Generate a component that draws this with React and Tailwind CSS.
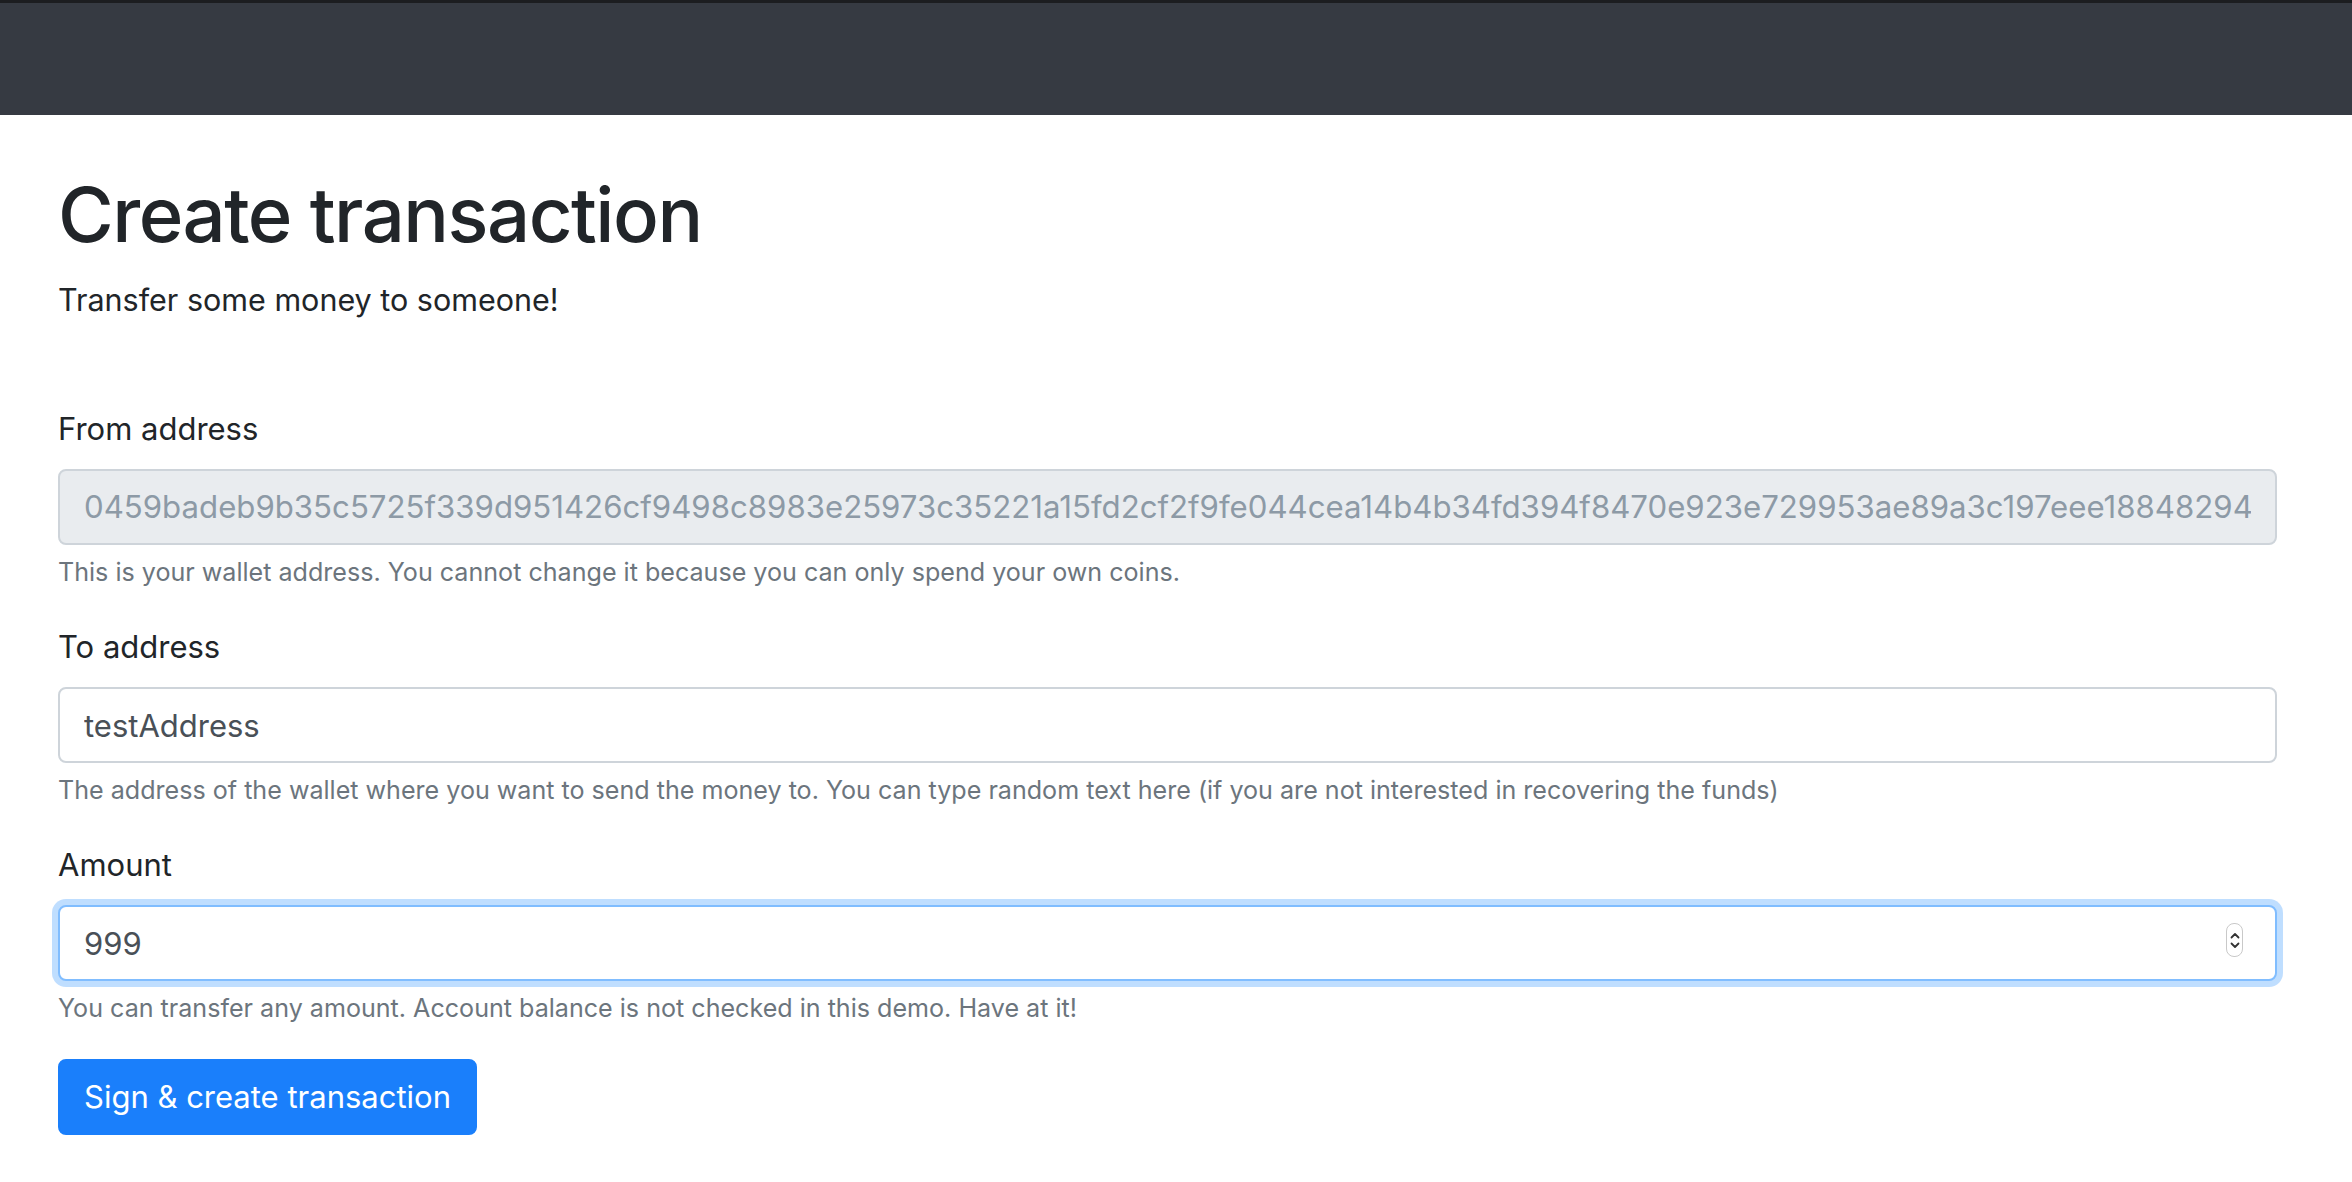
import React from 'react'

const FROM_ADDRESS =
  '0459badeb9b35c5725f339d951426cf9498c8983e25973c35221a15fd2cf2f9fe044cea14b4b34fd394f8470e923e729953ae89a3c197eee18848294a7c1d0e5b3f6'

function Spinner() {
  return (
    <div className="absolute right-[34px] top-[18px] w-[17px] h-[34px] rounded-[8px] border border-[#c9c9c9] bg-white flex flex-col items-center justify-center gap-[3px]">
      <svg width="10" height="7" viewBox="0 0 10 7" fill="none" stroke="#333" strokeWidth="1.8" strokeLinecap="round" strokeLinejoin="round">
        <path d="M1.5 5.5L5 2l3.5 3.5" />
      </svg>
      <svg width="10" height="7" viewBox="0 0 10 7" fill="none" stroke="#333" strokeWidth="1.8" strokeLinecap="round" strokeLinejoin="round">
        <path d="M1.5 1.5L5 5l3.5-3.5" />
      </svg>
    </div>
  )
}

export default function App() {
  return (
    <div className="min-h-[1182px] bg-white text-[#212529] font-['Inter','Noto_Sans',sans-serif]">
      {/* Navbar */}
      <nav className="h-[115px] bg-[#363a42] border-t-[3px] border-[#1c1d20]" />

      <main className="pl-[58px] pr-[75px] pt-[51px]">
        <h1 className="text-[76px] leading-[96px] font-medium tracking-[-1.5px] mb-[14px]">Create transaction</h1>
        <p className="text-[30.5px] leading-[48px]">Transfer some money to someone!</p>

        <form className="mt-[81px]">
          {/* From */}
          <div className="mb-[32px]">
            <label className="block text-[31px] leading-[48px] mb-[16px]">From address</label>
            <input
              type="text"
              disabled
              value={FROM_ADDRESS}
              readOnly
              className="block w-full h-[76px] px-[24px] text-[31.2px] text-[#8d9aa6] bg-[#e9ecef] border-2 border-[#ced4da] rounded-[8px] outline-none"
            />
            <small className="block mt-[8px] text-[25.1px] leading-[38px] text-[#6c757d]">
              This is your wallet address. You cannot change it because you can only spend your own coins.
            </small>
          </div>

          {/* To */}
          <div className="mb-[32px]">
            <label className="block text-[31px] leading-[48px] mb-[16px]">To address</label>
            <input
              type="text"
              value="testAddress"
              readOnly
              className="block w-full h-[76px] px-[24px] text-[31px] text-[#495057] bg-white border-2 border-[#ced4da] rounded-[8px] outline-none"
            />
            <small className="block mt-[8px] text-[25.1px] leading-[38px] text-[#6c757d]">
              The address of the wallet where you want to send the money to. You can type random text here (if you are not interested in recovering the funds)
            </small>
          </div>

          {/* Amount */}
          <div className="mb-[32px]">
            <label className="block text-[31px] leading-[48px] mb-[16px]">Amount</label>
            <div className="relative">
              <input
                type="text"
                value="999"
                readOnly
                className="block w-full h-[76px] px-[24px] text-[31px] text-[#495057] bg-white border-2 border-[#80bdff] rounded-[8px] outline-none shadow-[0_0_0_6px_rgba(0,123,255,0.25)]"
              />
              <Spinner />
            </div>
            <small className="block mt-[8px] text-[25.1px] leading-[38px] text-[#6c757d]">
              You can transfer any amount. Account balance is not checked in this demo. Have at it!
            </small>
          </div>

          <button
            type="button"
            className="h-[76px] px-[24px] text-[31px] text-white bg-[#1a7ffb] rounded-[8px] border-2 border-[#1a7ffb]"
          >
            Sign &amp; create transaction
          </button>
        </form>
      </main>
    </div>
  )
}
